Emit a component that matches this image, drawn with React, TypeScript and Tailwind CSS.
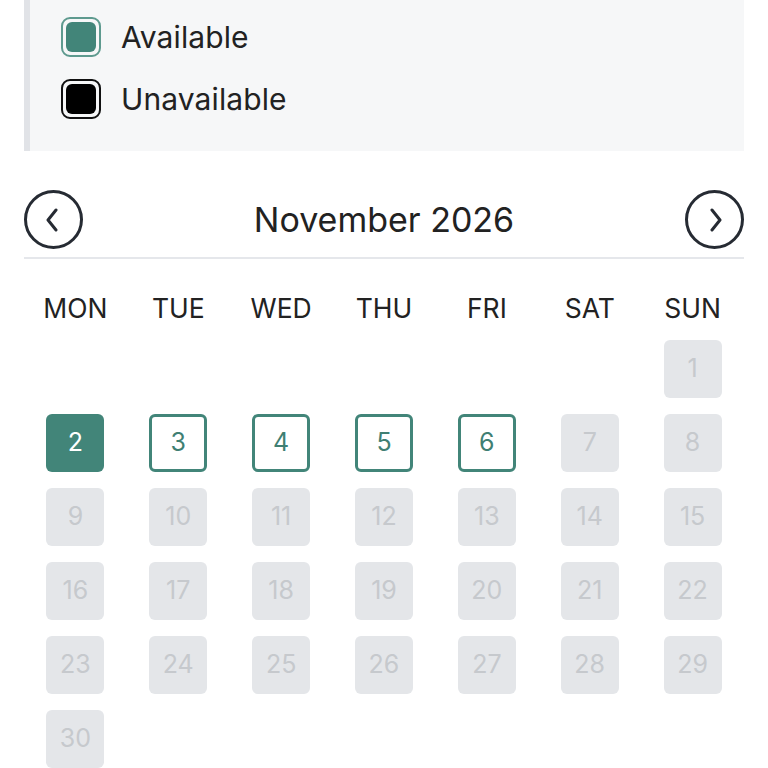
import React from 'react'

const days = ['MON', 'TUE', 'WED', 'THU', 'FRI', 'SAT', 'SUN']

// November 2026 starts on a Sunday
const cells: (number | null)[] = [null, null, null, null, null, null, ...Array.from({ length: 30 }, (_, i) => i + 1)]
const available = [3, 4, 5, 6]
const selected = 2

const Chevron = ({ dir }: { dir: 'left' | 'right' }) => (
  <svg width="16" height="24" viewBox="0 0 16 24" fill="none" stroke="#262b33" strokeWidth="3" strokeLinecap="round" strokeLinejoin="round">
    {dir === 'left' ? <path d="M12 2 L4 12 L12 22" /> : <path d="M4 2 L12 12 L4 22" />}
  </svg>
)

const App = () => {
  return (
    <div className="w-[768px] h-[768px] overflow-hidden bg-white px-6 text-[#222] font-['Inter','Noto_Sans',sans-serif]">
      <div className="bg-[#f6f7f8] border-l-[6px] border-[#e1e3e7] pt-[17px] pb-[32px] pl-[31px] flex flex-col gap-[22px]">
        <div className="flex items-center gap-5">
          <div className="w-10 h-10 rounded-[9px] border-2 border-[#5e9a8f] p-[3px]">
            <div className="w-full h-full rounded-[6px] bg-[#428579]" />
          </div>
          <span className="text-[30px] leading-none tracking-[0.1px]">Available</span>
        </div>
        <div className="flex items-center gap-5">
          <div className="w-10 h-10 rounded-[9px] border-2 border-[#111] p-[3px]">
            <div className="w-full h-full rounded-[6px] bg-black" />
          </div>
          <span className="text-[30px] leading-none tracking-[0.1px]">Unavailable</span>
        </div>
      </div>

      <div className="mt-[39px] flex items-center justify-between">
        <button className="w-[59px] h-[59px] rounded-full border-[3px] border-[#262b33] flex items-center justify-center pr-[3px]">
          <Chevron dir="left" />
        </button>
        <h2 className="text-[34px] leading-none text-[#222]">November 2026</h2>
        <button className="w-[59px] h-[59px] rounded-full border-[3px] border-[#262b33] flex items-center justify-center pl-[3px]">
          <Chevron dir="right" />
        </button>
      </div>
      <div className="mt-[8px] h-[2px] bg-[#e5e7eb]" />

      <div className="grid grid-cols-7 mt-[36px]">
        {days.map((d) => (
          <div key={d} className="text-center text-[26.5px] leading-none text-[#222]">{d}</div>
        ))}
      </div>

      <div className="grid grid-cols-7 gap-y-4 mt-[18px]">
        {cells.map((n, i) => (
          <div key={i} className="flex justify-center">
            {n === null ? (
              <div className="w-[58px] h-[58px]" />
            ) : n === selected ? (
              <div className="w-[58px] h-[58px] rounded-[6px] bg-[#428579] text-white text-[25px] flex items-center justify-center">{n}</div>
            ) : available.includes(n) ? (
              <div className="w-[58px] h-[58px] rounded-[6px] border-[3px] border-[#428579] text-[#3f7f73] text-[25px] flex items-center justify-center">{n}</div>
            ) : (
              <div className="w-[58px] h-[58px] rounded-[6px] bg-[#e4e6e9] text-[#c6c9cd] text-[25px] flex items-center justify-center">{n}</div>
            )}
          </div>
        ))}
      </div>
    </div>
  )
}

export default App
